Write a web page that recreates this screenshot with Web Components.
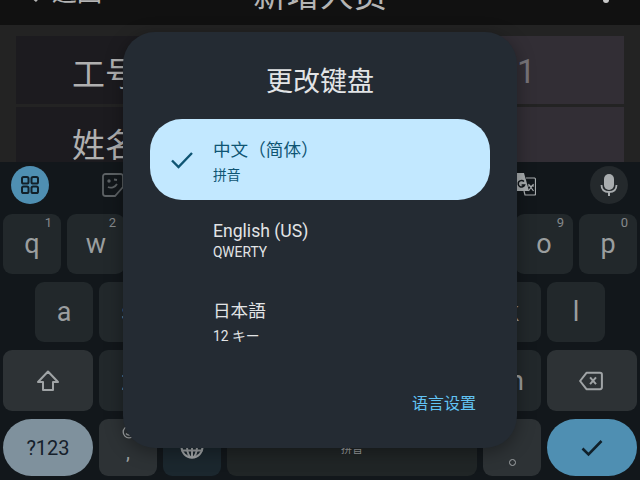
<!DOCTYPE html>
<html lang="zh-CN">
<head>
<meta charset="utf-8">
<title>更改键盘</title>
<style>
  html, body { margin: 0; background: #12171b; }
  body { font-family: Roboto, "Noto Sans CJK SC", sans-serif; }
</style>
</head>
<body>
<ime-screen>
  <app-bar slot="page" back="返回">新增人员</app-bar>
  <form-area slot="page">
    <form-row label="工号" value="1"></form-row>
    <form-row label="姓名"></form-row>
  </form-area>
  <ime-keyboard slot="page"></ime-keyboard>
  <keyboard-dialog slot="over" heading="更改键盘" action="语言设置">
    <lang-item selected>中文（简体）<span slot="sub">拼音</span></lang-item>
    <lang-item>English (US)<span slot="sub">QWERTY</span></lang-item>
    <lang-item style="margin-top:-1px">日本語<span slot="sub">12 キー</span></lang-item>
  </keyboard-dialog>
</ime-screen>

<script>
const icons = {
  apps: `<svg width="20" height="20" viewBox="0 0 20 20" fill="none" stroke="#12202a" stroke-width="2"><rect x="2" y="2" width="6.5" height="6.5" rx="1.6"/><rect x="11.5" y="2" width="6.5" height="6.5" rx="1.6"/><rect x="2" y="11.5" width="6.5" height="6.5" rx="1.6"/><rect x="11.5" y="11.5" width="6.5" height="6.5" rx="1.6"/></svg>`,
  sticker: `<svg width="22" height="24" viewBox="0 0 22 24" fill="none" stroke="#5d6265" stroke-width="1.8"><path d="M3.5 1h15A2.5 2.5 0 0 1 21 3.5V14l-8 9H3.5A2.5 2.5 0 0 1 1 20.500V3.500A2.500 2.500 0 0 1 3.500 1z"/><path d="M6 14c3 1.500 7 .5 9-3"/><circle cx="7" cy="8" r=".8"/><path d="M12 6.500l3 .5"/></svg>`,
  translate: `<svg width="30" height="24" viewBox="0 0 30 24"><path d="M1 0h17l5 18H3a2 2 0 0 1-2-2z" fill="#a9adaf"/><path d="M20 5h8.500a1.500 1.500 0 0 1 1 1.500V21a1 1 0 0 1-1 1H19l-1-4" fill="none" stroke="#a9adaf" stroke-width="1.200"/><path d="M22.500 11l5 7M27.500 11l-5 7M22 13h6" stroke="#a9adaf" stroke-width="1.200"/><path d="M18 8.500a3.300 3.300 0 1 0 .6 3.400h-3" fill="none" stroke="#12171b" stroke-width="1.500"/></svg>`,
  mic: `<svg width="24" height="24" viewBox="0 0 24 24" fill="#a9adaf"><rect x="7" y="1" width="10" height="16" rx="5"/><path d="M4.500 12c0 4.500 3 7 7.500 7s7.500-2.500 7.500-7" fill="none" stroke="#a9adaf" stroke-width="1.800"/><rect x="11" y="18" width="2" height="5"/></svg>`,
  shift: `<svg width="24" height="24" viewBox="0 0 24 24" fill="none" stroke="#a0a4a6" stroke-width="2"><path d="M12 2.500L22 13h-5v8H7v-8H2z" stroke-linejoin="round"/></svg>`,
  backspace: `<svg width="24" height="20" viewBox="0 0 26 22" fill="none" stroke="#a0a4a6" stroke-width="2.200" style="margin-right:2px"><path d="M8 2h15a2 2 0 0 1 2 2v14a2 2 0 0 1-2 2H8l-7-9z" stroke-linejoin="round"/><path d="M12 7l6.500 7.500M18.500 7L12 14.500"/></svg>`,
  enter: `<svg width="22" height="18" viewBox="0 0 22 18" fill="none" stroke="#10202a" stroke-width="2.600"><path d="M1.500 9.500l6 6L20.500 2"/></svg>`,
  globe: `<svg width="24" height="24" viewBox="0 0 24 24" fill="none" stroke="#a0a4a6" stroke-width="2" style="margin-bottom:2px"><circle cx="12" cy="12" r="10.500"/><ellipse cx="12" cy="12" rx="5" ry="10.500"/><path d="M1.500 8.500h21M1.500 15.500h21M12 1.500v21"/></svg>`,
  emoji: `<svg width="14" height="14" viewBox="0 0 14 14" fill="none" stroke="#a0a4a6" stroke-width="1.300"><circle cx="7" cy="7" r="5.800"/><path d="M4 8.500c1.500 2 4.500 2 6 0"/></svg>`,
  check: `<svg width="24" height="18" viewBox="0 0 24 18" fill="none" stroke="#0f5573" stroke-width="2.400"><path d="M2 9.500l6.500 6.500L22 2"/></svg>`,
};

class ImeScreen extends HTMLElement {
  constructor() {
    super();
    this.attachShadow({mode: 'open'}).innerHTML = `
      <style>
        :host { display: block; position: relative; width: 640px; height: 480px; overflow: hidden; }
        .page { display: flex; flex-direction: column; height: 100%; }
      </style>
      <div class="page"><slot name="page"></slot></div>
      <slot name="over"></slot>`;
  }
}
customElements.define('ime-screen', ImeScreen);

class AppBar extends HTMLElement {
  constructor() {
    super();
    this.attachShadow({mode: 'open'}).innerHTML = `
      <style>
        :host { display: flex; flex: none; height: 25px; background: #111; color: #b4b4b4; overflow: hidden;
                align-items: flex-end; padding: 0 28px 14px 28px; box-sizing: border-box; position: relative; }
        .side { flex: 1; display: flex; align-items: center; line-height: 36px; height: 36px; }
        .back { font-size: 25px; gap: 13px; }
        .back svg { margin-left: -3px; }
        .title { font-size: 33.500px; line-height: 44px; height: 44px; margin-bottom: -7px; }
        .more { justify-content: flex-end; align-items: flex-end; }
        .dot { width: 6px; height: 6px; border-radius: 50%; background: #c8c8c8; margin: 0 3px 8px 0; display: block; }
      </style>
      <div class="side back">
        <svg width="14" height="20" viewBox="0 0 14 20" fill="none" stroke="#b4b4b4" stroke-width="3"><path d="M12 2l-9 8 9 8"/></svg>
        <span id="back"></span>
      </div>
      <div class="title"><slot></slot></div>
      <div class="side more"><i class="dot"></i></div>`;
  }
  connectedCallback() {
    this.shadowRoot.getElementById('back').textContent = this.getAttribute('back');
  }
}
customElements.define('app-bar', AppBar);

class FormArea extends HTMLElement {
  constructor() {
    super();
    this.attachShadow({mode: 'open'}).innerHTML = `
      <style>
        :host { display: flex; flex-direction: column; gap: 3px; flex: none; height: 137px; box-sizing: border-box;
                padding: 11px 16px 0; background: #232323; overflow: hidden; }
      </style>
      <slot></slot>`;
  }
}
customElements.define('form-area', FormArea);

class FormRow extends HTMLElement {
  constructor() {
    super();
    this.attachShadow({mode: 'open'}).innerHTML = `
      <style>
        :host { display: grid; grid-template-columns: 300px 1fr; height: 68px; flex: none; font-size: 33px; }
        div { display: flex; align-items: center; box-sizing: border-box; padding-top: 3px; }
        .label { background: #1c1b1f; color: #b0b0b0; padding-left: 56px; }
        .value { background: #322e35; color: #77747a; padding-left: 201px; }
      </style>
      <div class="label" id="l"></div>
      <div class="value" id="v"></div>`;
  }
  connectedCallback() {
    this.shadowRoot.getElementById('l').textContent = this.getAttribute('label');
    this.shadowRoot.getElementById('v').textContent = this.getAttribute('value') || '';
  }
}
customElements.define('form-row', FormRow);

class KbKey extends HTMLElement {
  constructor() {
    super();
    this.attachShadow({mode: 'open'}).innerHTML = `
      <style>
        :host { display: flex; position: relative; flex: 0 0 58px; align-items: center; justify-content: center;
                background: #22282b; color: #9b9e9f; border-radius: 9px; font-size: 27px; }
        :host([kind="mod"]) { flex-basis: 90px; background: #2d3235; }
        :host([kind="alt"]) { background: #2d3235; }
        :host([kind="globe"]) { background: #1b272e; }
        :host([kind="space"]) { flex-basis: 250px; background: #202526; font-size: 11px; }
        :host([kind="sym"]) { flex-basis: 90px; background: #7f919d; color: #15202b; border-radius: 29px; font-size: 20px; }
        :host([kind="enter"]) { flex-basis: 90px; background: #4f8fb2; border-radius: 29px; }
        .hint { position: absolute; top: 1px; right: 9px; font-size: 13px; line-height: 16px; color: #85898b; }
      </style>
      <span class="hint" id="h"></span>
      <slot></slot>`;
  }
  connectedCallback() {
    this.shadowRoot.getElementById('h').textContent = this.getAttribute('hint') || '';
  }
}
customElements.define('kb-key', KbKey);

class ImeKeyboard extends HTMLElement {
  constructor() {
    super();
    const letters = (s, hints = '') => [...s].map((c, i) =>
      `<kb-key hint="${hints[i] || ''}">${c}</kb-key>`).join('');
    this.attachShadow({mode: 'open'}).innerHTML = `
      <style>
        :host { display: flex; flex-direction: column; flex: 1; background: #12171b; box-sizing: border-box; padding: 0 3px 4px; }
        .tools { display: flex; align-items: center; height: 52px; flex: none; margin: 0 -3px; padding: 0 12px 6px 11px; box-sizing: border-box; }
        .round { width: 38px; height: 38px; border-radius: 50%; display: flex; align-items: center; justify-content: center; }
        .apps { background: #4f8fb2; }
        .mic { background: #24292c; margin-left: 54px; }
        .sticker { margin-left: 53px; display: flex; }
        .spring { flex: 1; }
        .translate { display: flex; }
        .rows { display: flex; flex-direction: column; gap: 8px; flex: 1; }
        .row { display: flex; gap: 6px; height: 60px; flex: none; }
        .row.mid { padding-left: 32px; }
        .row.third { height: 61px; }
        .row.last { height: 57px; }
        .emoji { position: absolute; top: 6px; left: 23px; display: flex; }
        .comma { position: absolute; top: 18px; left: 0; right: 0; text-align: center; font-size: 20px; line-height: 30px; }
        .stop { position: absolute; top: 28px; left: 0; right: 0; }
        .stop b { display: block; width: 7px; height: 7px; border: 1.500px solid #a0a4a6; border-radius: 50%; box-sizing: border-box; margin: 12px auto 0; }
      </style>
      <div class="tools">
        <div class="round apps">${icons.apps}</div>
        <div class="sticker">${icons.sticker}</div>
        <div class="spring"></div>
        <div class="translate">${icons.translate}</div>
        <div class="round mic">${icons.mic}</div>
      </div>
      <div class="rows">
        <div class="row">${letters('qwertyuiop', '1234567890')}</div>
        <div class="row mid">${letters('asdfghjkl')}</div>
        <div class="row third">
          <kb-key kind="mod">${icons.shift}</kb-key>
          ${letters('zxcvbnm')}
          <kb-key kind="mod">${icons.backspace}</kb-key>
        </div>
        <div class="row last">
          <kb-key kind="sym">?123</kb-key>
          <kb-key kind="alt"><span class="emoji">${icons.emoji}</span><span class="comma">,</span></kb-key>
          <kb-key kind="globe">${icons.globe}</kb-key>
          <kb-key kind="space">拼音</kb-key>
          <kb-key kind="alt"><span class="stop"><b></b></span></kb-key>
          <kb-key kind="enter">${icons.enter}</kb-key>
        </div>
      </div>`;
  }
}
customElements.define('ime-keyboard', ImeKeyboard);

class KeyboardDialog extends HTMLElement {
  constructor() {
    super();
    this.attachShadow({mode: 'open'}).innerHTML = `
      <style>
        :host { display: flex; flex-direction: column; position: absolute; left: 123px; top: 32px; width: 394px; height: 416px;
                box-sizing: border-box; padding: 0 27px; background: #242b33; border-radius: 32px;
                box-shadow: 0 4px 18px rgba(0,0,0,.35); color: #e2e4e6; }
        h2 { margin: 0; height: 87px; display: flex; align-items: center; justify-content: center; padding-top: 7px; box-sizing: border-box;
             font-size: 27px; font-weight: 400; color: #e2e4e6; }
        .list { display: flex; flex-direction: column; }
        .foot { margin-top: auto; height: 84px; display: flex; justify-content: flex-end; padding: 0 14px 0 0; box-sizing: border-box; }
        .foot span { font-size: 16px; line-height: 24px; color: #62c4f5; margin-top: 28px; }
      </style>
      <h2 id="h"></h2>
      <div class="list"><slot></slot></div>
      <div class="foot"><span id="a"></span></div>`;
  }
  connectedCallback() {
    this.shadowRoot.getElementById('h').textContent = this.getAttribute('heading');
    this.shadowRoot.getElementById('a').textContent = this.getAttribute('action');
  }
}
customElements.define('keyboard-dialog', KeyboardDialog);

class LangItem extends HTMLElement {
  constructor() {
    super();
    this.attachShadow({mode: 'open'}).innerHTML = `
      <style>
        :host { display: flex; align-items: center; height: 81px; border-radius: 32px; color: #e2e4e6; }
        :host([selected]) { background: #c2e8ff; color: #0f5573; }
        .mark { flex: 0 0 63px; display: flex; justify-content: center; padding-left: 1px; box-sizing: border-box; }
        .mark svg { display: none; }
        :host([selected]) .mark svg { display: block; }
        .text { display: flex; flex-direction: column; gap: 3px; }
        .main { font-size: 17.600px; line-height: normal; }
        .sub { font-size: 13.800px; line-height: normal; }
      </style>
      <div class="mark">${icons.check}</div>
      <div class="text">
        <div class="main"><slot></slot></div>
        <div class="sub"><slot name="sub"></slot></div>
      </div>`;
  }
}
customElements.define('lang-item', LangItem);
</script>
</body>
</html>
